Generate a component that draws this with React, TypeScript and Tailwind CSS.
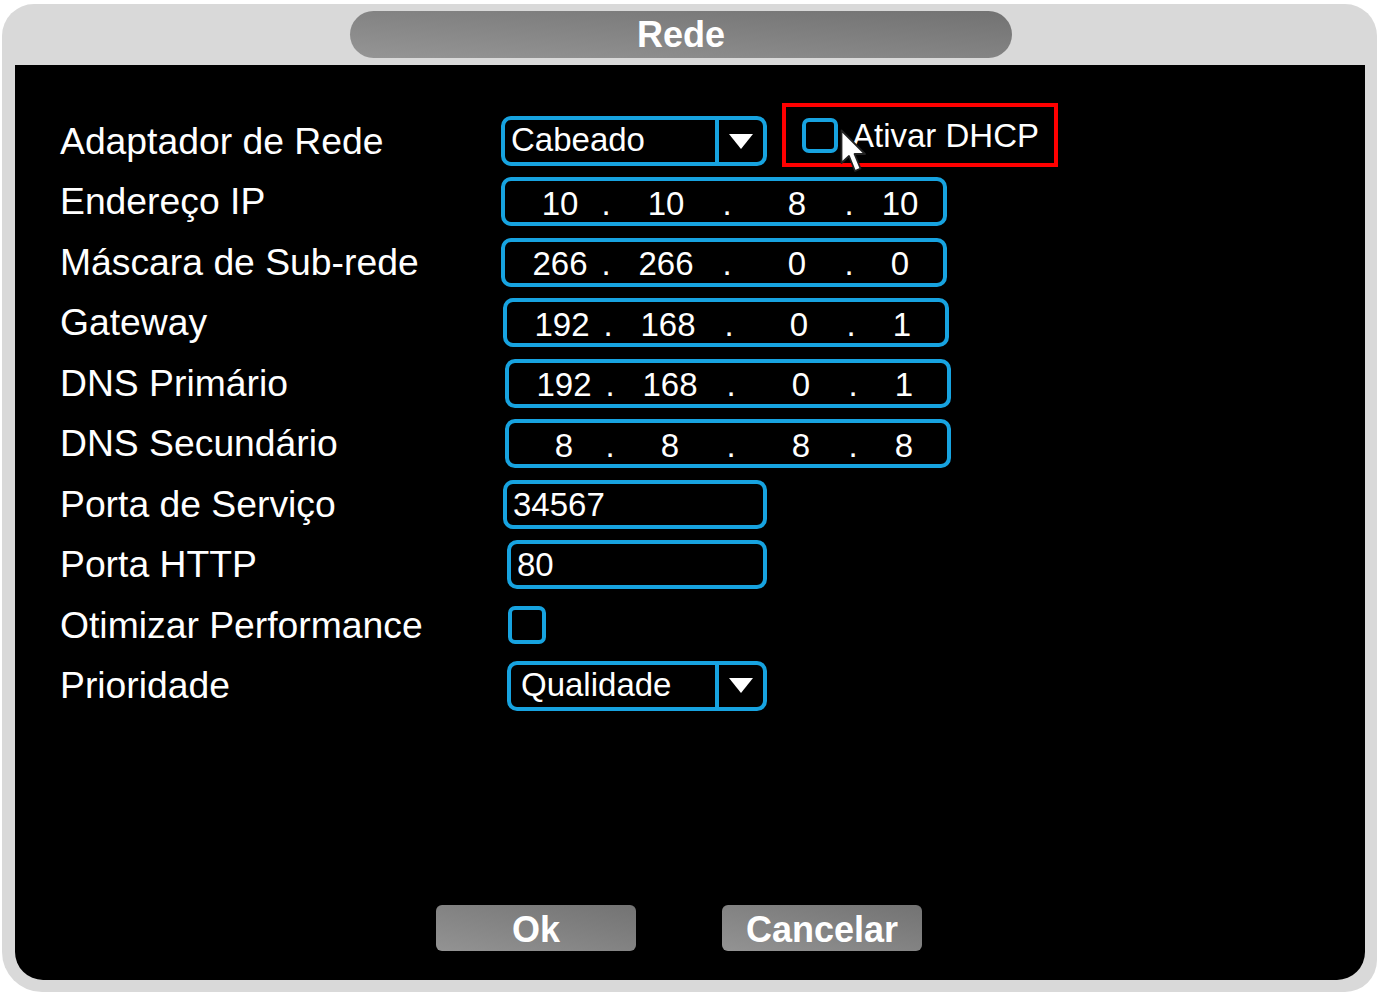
import React from "react";

const font = { fontFamily: '"Liberation Sans", Arial, sans-serif' };

type Row = { label: string; ml: number; control: React.ReactNode };

const Octets = ({ parts }: { parts: string[] }) => {
  // octet centre offsets inside the box, taken from the screen
  return (
    <div className="flex items-center h-full pt-[3px] text-[33px] leading-none text-white">
      <span className="ml-[25px] w-[60px] text-center">{parts[0]}</span>
      <span className="ml-[11px] w-[10px] text-center">.</span>
      <span className="ml-[25px] w-[60px] text-center">{parts[1]}</span>
      <span className="ml-[26px] w-[10px] text-center">.</span>
      <span className="ml-[35px] w-[60px] text-center">{parts[2]}</span>
      <span className="ml-[17px] w-[10px] text-center">.</span>
      <span className="ml-[16px] w-[60px] text-center">{parts[3]}</span>
    </div>
  );
};

const IpBox = ({ parts }: { parts: string[] }) => (
  <div className="w-[446px] h-[49px] rounded-[10px] border-[4px] border-[#17a3e0]">
    <Octets parts={parts} />
  </div>
);

const TextBox = ({ value, width }: { value: string; width: number }) => (
  <div
    className="h-[49px] rounded-[10px] border-[4px] border-[#17a3e0] flex items-center pl-[6px] text-[33px] text-white leading-none"
    style={{ width }}
  >
    {value}
  </div>
);

const Select = ({ value, width, pl }: { value: string; width: number; pl: number }) => (
  <div
    className="h-[50px] rounded-[10px] border-[4px] border-[#17a3e0] flex items-stretch text-[33px] text-white leading-none"
    style={{ width }}
  >
    <div className="flex-1 flex items-center pb-[3px]" style={{ paddingLeft: pl }}>
      {value}
    </div>
    <div className="w-[48px] border-l-[4px] border-[#17a3e0] flex items-center justify-center">
      <svg width="24" height="15" viewBox="0 0 24 15">
        <polygon points="0,0 24,0 12,15" fill="#fff" />
      </svg>
    </div>
  </div>
);

const Checkbox = () => (
  <div className="w-[38px] h-[38px] rounded-[7px] border-[4px] border-[#17a3e0]" />
);

const Cursor = () => (
  <svg
    className="absolute left-[54px] top-[22px]"
    width="28"
    height="46"
    viewBox="0 0 28 46"
  >
    <path
      d="M1.5 1.5 L1.5 34 L9 27 L15 42 L20.5 39.5 L14.5 25 L25 25 Z"
      fill="#fff"
      stroke="#222"
      strokeWidth="1.8"
      strokeLinejoin="round"
    />
  </svg>
);

const rows: Row[] = [
  {
    label: "Adaptador de Rede",
    ml: 0,
    control: (
      <div className="flex items-center">
        <Select value="Cabeado" width={266} pl={6} />
        <div className="relative ml-[15px] -mt-[12px] w-[276px] h-[64px] border-[4px] border-[#ff0000] flex items-center">
          <div className="ml-[16px]">
            <div className="w-[36px] h-[35px] rounded-[7px] border-[4px] border-[#17a3e0]" />
          </div>
          <span className="ml-[14px] text-[33px] text-white leading-none">Ativar DHCP</span>
          <Cursor />
        </div>
      </div>
    ),
  },
  { label: "Endereço IP", ml: 0, control: <IpBox parts={["10", "10", "8", "10"]} /> },
  { label: "Máscara de Sub-rede", ml: 0, control: <IpBox parts={["266", "266", "0", "0"]} /> },
  { label: "Gateway", ml: 2, control: <IpBox parts={["192", "168", "0", "1"]} /> },
  { label: "DNS Primário", ml: 4, control: <IpBox parts={["192", "168", "0", "1"]} /> },
  { label: "DNS Secundário", ml: 4, control: <IpBox parts={["8", "8", "8", "8"]} /> },
  { label: "Porta de Serviço", ml: 2, control: <TextBox value="34567" width={264} /> },
  { label: "Porta HTTP", ml: 6, control: <TextBox value="80" width={260} /> },
  { label: "Otimizar Performance", ml: 7, control: <Checkbox /> },
  { label: "Prioridade", ml: 6, control: <Select value="Qualidade" width={260} pl={10} /> },
];

export default function App() {
  return (
    <div className="w-[1378px] h-[993px] bg-white overflow-hidden" style={font}>
      <div className="ml-[2px] mt-[4px] w-[1375px] h-[988px] rounded-[32px] rounded-bl-[40px] bg-[#d9d9d9] flex flex-col">
        {/* title bar */}
        <div className="h-[61px] flex items-start pt-[7px] pl-[348px]">
          <div className="w-[662px] h-[47px] rounded-full bg-gradient-to-tr from-[#959595] to-[#727272] flex items-center justify-center">
            <span className="text-[36px] font-bold text-white leading-none">Rede</span>
          </div>
        </div>

        {/* black panel */}
        <div className="ml-[13px] w-[1350px] h-[915px] bg-black rounded-b-[28px] flex flex-col">
          <div className="pt-[46px] flex flex-col">
            {rows.map((r) => (
              <div key={r.label} className="h-[60.5px] flex items-center">
                <div className="w-[486px] pl-[45px] text-[37.3px] text-white leading-none">
                  {r.label}
                </div>
                <div style={{ marginLeft: r.ml }}>{r.control}</div>
              </div>
            ))}
          </div>

          {/* buttons */}
          <div className="mt-auto mb-[29px] flex pl-[421px] gap-[86px]">
            <button className="w-[200px] h-[46px] pt-[3px] rounded-[6px] bg-gradient-to-tr from-[#939393] to-[#737373] text-white text-[36px] font-bold leading-none">
              Ok
            </button>
            <button className="w-[200px] h-[46px] pt-[3px] rounded-[6px] bg-gradient-to-tr from-[#939393] to-[#737373] text-white text-[36px] font-bold leading-none">
              Cancelar
            </button>
          </div>
        </div>
      </div>
    </div>
  );
}
